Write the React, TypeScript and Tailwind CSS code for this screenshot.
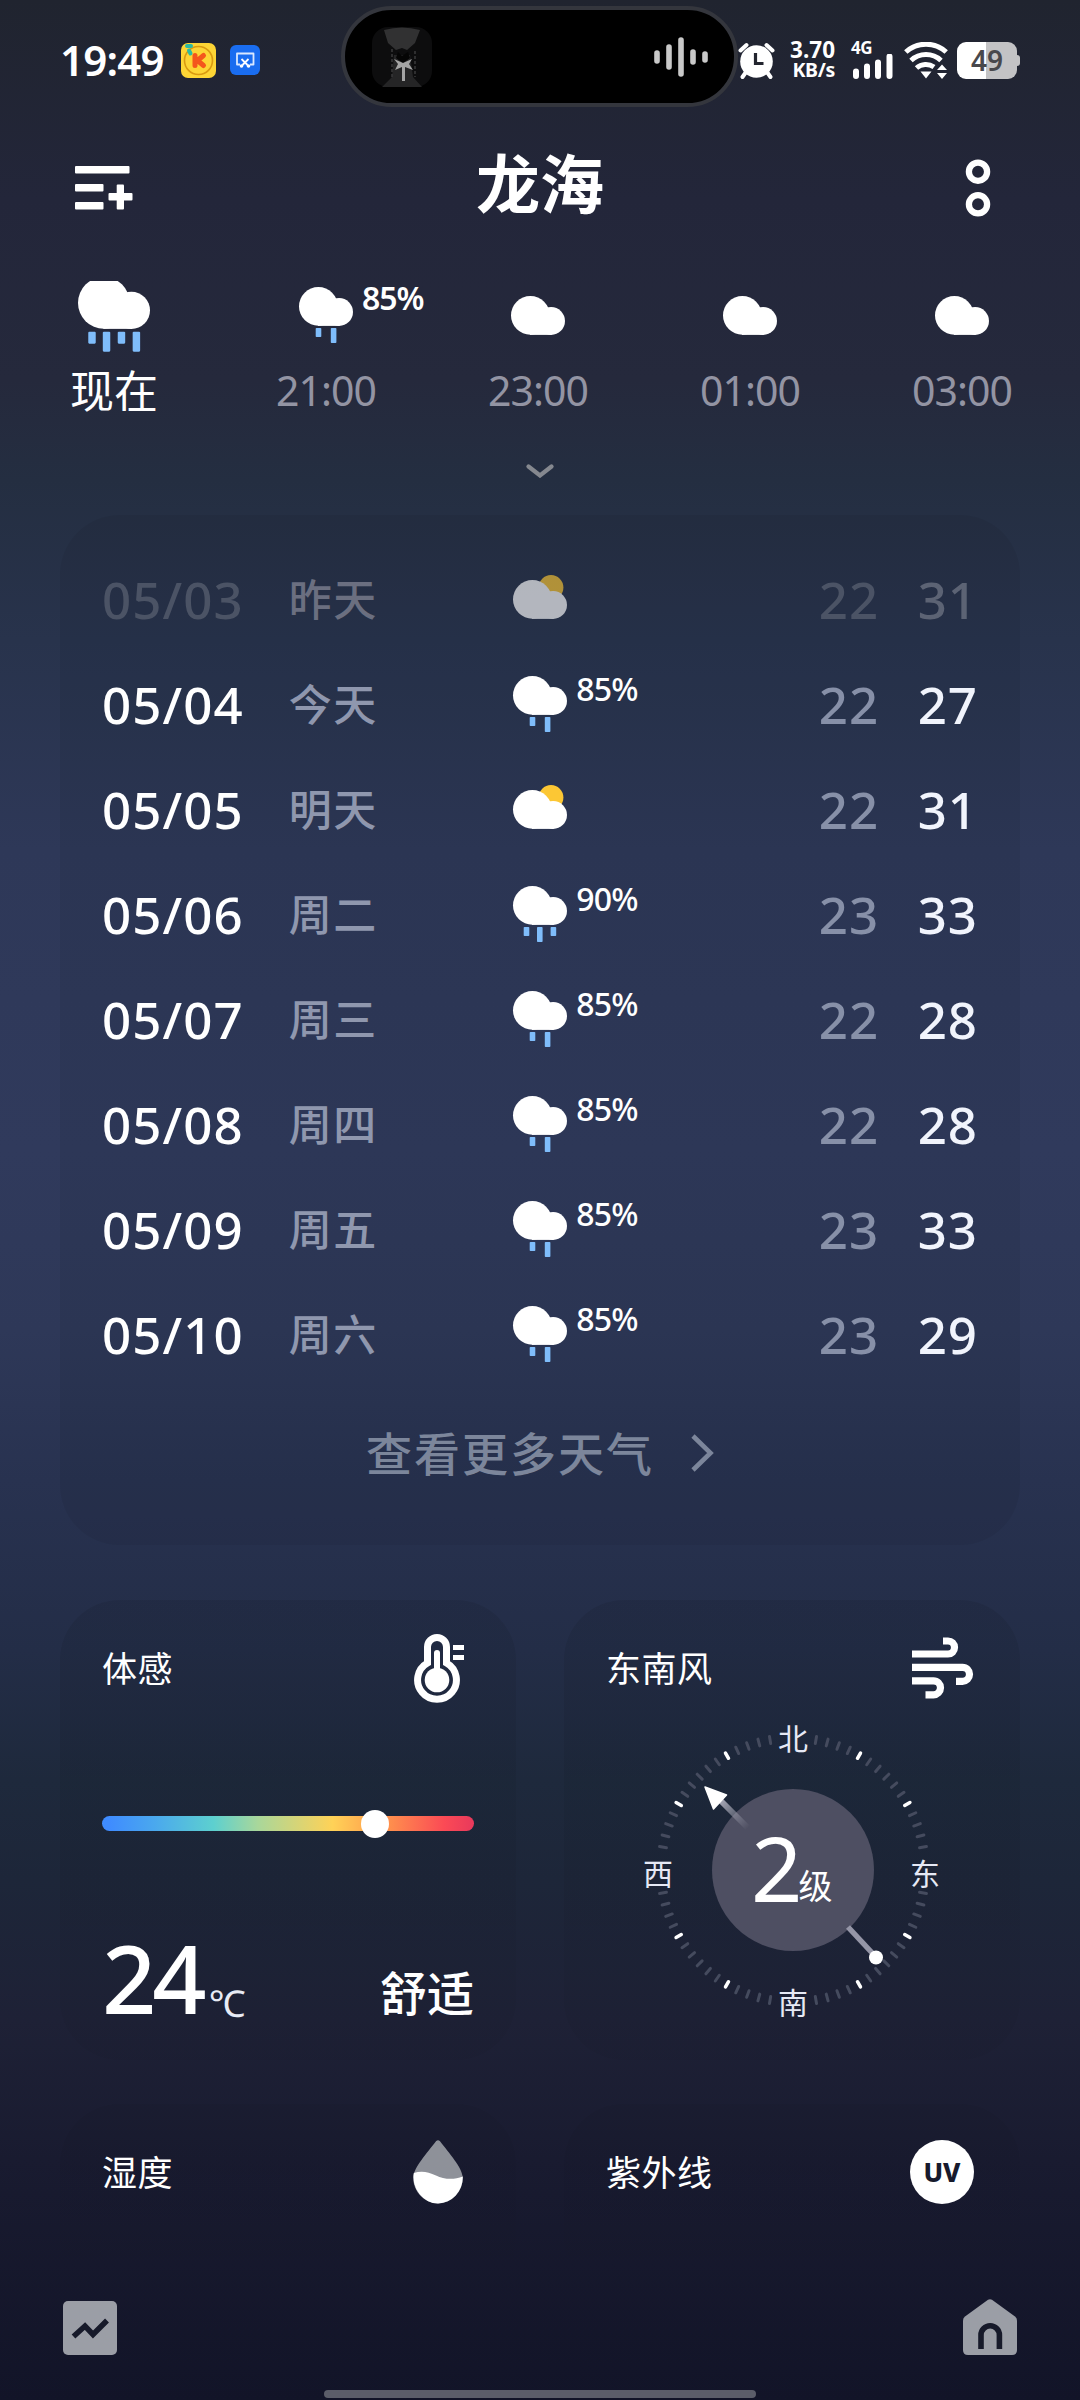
import type { ReactNode } from "react";
import clsx from "clsx";

type Rain = "none" | "light" | "medium" | "heavy";

interface HourItem {
    label: string;
    rain: Rain;
    chance?: string;
    now?: boolean;
}

interface DayItem {
    date: string;
    day: string;
    rain: Rain;
    sun?: boolean;
    chance?: string;
    low: number;
    high: number;
    past?: boolean;
}

const hours: HourItem[] = [
    { label: "现在", rain: "heavy", now: true },
    { label: "21:00", rain: "light", chance: "85%" },
    { label: "23:00", rain: "none" },
    { label: "01:00", rain: "none" },
    { label: "03:00", rain: "none" },
];

const days: DayItem[] = [
    { date: "05/03", day: "昨天", rain: "none", sun: true, low: 22, high: 31, past: true },
    { date: "05/04", day: "今天", rain: "light", chance: "85%", low: 22, high: 27 },
    { date: "05/05", day: "明天", rain: "none", sun: true, low: 22, high: 31 },
    { date: "05/06", day: "周二", rain: "medium", chance: "90%", low: 23, high: 33 },
    { date: "05/07", day: "周三", rain: "light", chance: "85%", low: 22, high: 28 },
    { date: "05/08", day: "周四", rain: "light", chance: "85%", low: 22, high: 28 },
    { date: "05/09", day: "周五", rain: "light", chance: "85%", low: 23, high: 33 },
    { date: "05/10", day: "周六", rain: "light", chance: "85%", low: 23, high: 29 },
];

// x offset and length of every drop under the cloud
const drops: Record<Rain, [number, number][]> = {
    none: [],
    light: [[16.7, 9], [31.8, 15]],
    medium: [[10.7, 9], [24, 15], [37.6, 9]],
    heavy: [[7.7, 9], [18.6, 15], [29.8, 9], [41, 15]],
};

function WeatherIcon({ rain, sun, className }: { rain: Rain; sun?: boolean; className?: string }) {
    // dry clouds sit lower in the box than rainy ones
    const top = rain === "none" ? 9 : 0;
    return (
        <svg viewBox="0 0 54 56" className={clsx("shrink-0", className)}>
            {sun && <circle cx="38" cy={top + 7.5} r="12.4" fill="#fcc734" />}
            <g fill="#fff" transform={`translate(0 ${top})`}>
                <circle cx="19.4" cy="19.4" r="19.4" />
                <circle cx="40.1" cy="25" r="13.9" />
                <rect x="19" y="18" width="21.5" height="20.9" />
            </g>
            {drops[rain].map(([x, h]) => (
                <rect key={x} x={x} y="41" width="5.6" height={h} rx="0.8" fill="#7fbdfb" />
            ))}
        </svg>
    );
}

function StatusBar() {
    return (
        <div className="flex h-[114px] shrink-0">
            <div className="flex w-[341px] items-center pt-1.5 pl-[60px]">
                <span className="w-[121px] text-[42px] leading-none font-semibold tracking-[-0.8px]">19:49</span>
                <svg viewBox="0 0 35 35" className="size-[35px]">
                    <rect width="35" height="35" rx="7" fill="#fdd535" />
                    <circle cx="17.5" cy="17.5" r="14" fill="none" stroke="#d99a10" strokeWidth="1.600" />
                    <path d="M14 12.500v10M22.500 12.500l-6 5 6 5" fill="none" stroke="#f4571c" strokeWidth="5" strokeLinejoin="round" strokeLinecap="round" />
                    <path d="M6 3l4 0M8 7.500l1.500 3" stroke="#2cb9a3" strokeWidth="4" strokeLinecap="round" />
                </svg>
                <svg viewBox="0 0 30 30" className="ml-[14px] size-[30px]">
                    <rect width="30" height="30" rx="6" fill="#1a6df0" />
                    <path d="M10 19.500H7V8.500h16.500v11H20" fill="none" stroke="#d9e8ff" strokeWidth="1.800" strokeLinejoin="round" />
                    <path d="M11.500 14l6 6M18.500 14l-6 6" stroke="#fff" strokeWidth="1.800" />
                    <circle cx="11.500" cy="21" r="1.800" fill="#fff" />
                    <circle cx="18.500" cy="21" r="1.800" fill="#fff" />
                </svg>
            </div>
            <div className="mt-1.5 flex h-[101px] w-[397px] items-center justify-between rounded-full border-[4px] border-[#34363d] bg-black pr-[26px] pl-[27px]">
                <svg viewBox="0 0 60 60" className="size-[60px]">
                    <rect width="60" height="60" rx="16" fill="#0d0d0e" />
                    <path d="M12 3q18-5 36 0l-5 13-8 7-5-2-6 2-8-7z" fill="#313132" />
                    <path d="M10 60l10-10 2-22h16l3 22 9 10z" fill="#252526" />
                    <path d="M26 25l4 4 6-4 2 6-7 5-7-5z" fill="#050505" />
                    <path d="M22 32l9 4 9-4-3 5 4 6-8-3v14h-3V40l-7 3 3-6z" fill="#a4a4a4" />
                    <path d="M20 22v28M43 24v26" stroke="#3a3a3b" strokeWidth="1.500" strokeDasharray="3 2" />
                </svg>
                <svg viewBox="0 0 54 40" className="h-10 w-[54px]" stroke="#c9c9c9" strokeWidth="5.6" strokeLinecap="round">
                    <path d="M3 16v8M15 10v20M27 3v34M39 15v10M51 17v6" />
                </svg>
            </div>
            <div className="flex items-center pt-1.5">
                <svg viewBox="0 0 37 37" className="size-[37px]">
                    <path d="M2.500 8.500l6-5.500M34.500 8.500l-6-5.500M8 30l-3.500 5M29 30l3.500 5" stroke="#fff" strokeWidth="4" strokeLinecap="round" />
                    <circle cx="18.500" cy="19.500" r="16.300" fill="#fff" />
                    <path d="M17.500 11v10.500h8" fill="none" stroke="#23252f" strokeWidth="3.200" />
                </svg>
                <div className="ml-[12px] flex w-[48px] flex-col items-end text-right font-bold">
                    <span className="text-[22.5px] leading-5">3.70</span>
                    <span className="text-[19.500px] leading-5 tracking-[-0.3px]">KB/s</span>
                </div>
                <div className="ml-4 flex h-[37px] w-[43px] flex-col">
                    <span className="h-3 text-[17px] leading-3 font-bold tracking-[-0.5px]">4G</span>
                    <svg viewBox="0 0 43 25" className="h-[25px] w-[43px]" stroke="#fff" strokeWidth="6" strokeLinecap="round">
                        <path d="M5 17.500V22M16 12.500V22M27 8.500V22M38.500 2.500V22" />
                    </svg>
                </div>
                <svg viewBox="0 0 44 37" className="ml-[10px] h-[37px] w-11" fill="none" stroke="#fff" strokeWidth="5">
                    <path d="M1.800 10a30 30 0 0 1 40.400 0" />
                    <path d="M7 18.500a22 22 0 0 1 30 0" />
                    <path d="M12.500 26a14 14 0 0 1 17.500-1" />
                    <path d="M16.500 29.500h11l-5.500 7zM38 22.500l5 5.500h-10zM38 37l5-6h-10z" fill="#fff" stroke="none" />
                </svg>
                <div className="ml-[9px] flex h-[37px] w-[60px] items-center justify-center rounded-[9px] bg-[linear-gradient(90deg,#fff_48%,#c3c3c5_48%)] text-[28px] leading-none font-semibold text-[#48484c]">
                    49
                </div>
                <div className="h-[11px] w-[3px] rounded-r-sm bg-[#c3c3c5]" />
            </div>
        </div>
    );
}

function Header() {
    return (
        <div className="flex h-[136px] shrink-0 items-center pr-[89px] pl-[75px]">
            <svg viewBox="0 0 58 44" className="mt-3 h-11 w-[58px]" fill="#fff">
                <rect width="54.500" height="7.500" rx="1" />
                <rect y="18" width="28.500" height="7.500" rx="1" />
                <rect y="36" width="28.500" height="7.500" rx="1" />
                <rect x="33.500" y="27" width="24" height="7.500" rx="1" />
                <rect x="41.700" y="18.500" width="7.300" height="25" rx="1" />
            </svg>
            <h1 className="mt-1 flex-1 pr-[18px] text-center text-[64px] leading-none font-bold">龙海</h1>
            <svg viewBox="0 0 26 58" className="mt-3 h-[58px] w-[26px]" fill="none" stroke="#fff" strokeWidth="6.300">
                <circle cx="13" cy="12.700" r="9.100" />
                <circle cx="13" cy="45.300" r="9.100" />
            </svg>
        </div>
    );
}

function HourlyForecast() {
    return (
        <div className="flex h-[200px] shrink-0 pl-2">
            {hours.map((h) => (
                <div key={h.label} className="flex w-[212px] flex-col items-center">
                    <div className={clsx("relative flex h-[98px]", h.now ? "mt-[31px] overflow-hidden" : "mt-[37px]")}>
                        <WeatherIcon
                            rain={h.rain}
                            className={h.now ? "-mt-1 h-[74.7px] w-[72px]" : "h-14 w-[54px]"}
                        />
                        {h.chance && (
                            <span className="absolute top-[-5px] left-[63px] text-[32px] leading-none font-semibold tracking-[-1px]">
                                {h.chance}
                            </span>
                        )}
                    </div>
                    {h.now ? (
                        <span className="-mt-[10px] text-[44px] leading-none">{h.label}</span>
                    ) : (
                        <span className="-mt-[15px] text-[41px] leading-none tracking-[-1px] text-[#9394a3]">{h.label}</span>
                    )}
                </div>
            ))}
        </div>
    );
}

function DailyForecast() {
    return (
        <div className="mx-[60px] mt-[37px] h-[1030px] shrink-0 rounded-[60px] bg-black/5 pt-8">
            {days.map((d) => (
                <div key={d.date} className="flex h-[105px] items-center pr-[42px] pl-[42px] text-[51px] leading-none font-medium">
                    <span className={clsx("w-[187px] tracking-[1.100px]", d.past && "text-[#4b5365]")}>{d.date}</span>
                    <span className={clsx("w-[225px] text-[43px] tracking-[1.500px]", d.past ? "text-[#6b6f80]" : "text-[#8f97ae]")}>
                        {d.day}
                    </span>
                    <div className={clsx("-mt-[2px] flex h-14 w-[306px]", d.past && "opacity-65")}>
                        <WeatherIcon rain={d.rain} sun={d.sun} className="h-14 w-[54px] overflow-visible" />
                        {d.chance && (
                            <span className="-mt-[3px] ml-[9px] text-[32px] leading-none tracking-[-0.8px]">{d.chance}</span>
                        )}
                    </div>
                    <span className={clsx("w-[99px] tracking-[1px]", d.past ? "text-[#4b5365]" : "text-[#8790a8]")}>{d.low}</span>
                    <span className={clsx("tracking-[1px]", d.past ? "text-[#5c6374]" : "text-[#f1f4fc]")}>{d.high}</span>
                </div>
            ))}
            <div className="flex h-[132px] items-center justify-center gap-[37px] text-[#7c869b]">
                <span className="text-[46px] leading-none font-medium tracking-[2px]">查看更多天气</span>
                <svg viewBox="0 0 23 38" className="h-[38px] w-[23px]" fill="none" stroke="currentColor" strokeWidth="4.600">
                    <path d="M2 2l17.500 17L2 36" />
                </svg>
            </div>
        </div>
    );
}

function Card({ title, icon, children, className }: { title: string; icon: ReactNode; children?: ReactNode; className?: string }) {
    return (
        <div className={clsx("w-[456px] rounded-[60px] px-[42px]", className)}>
            <div className="flex h-[136px] items-center justify-between">
                <span className="text-[35px] leading-none tracking-[0.5px]">{title}</span>
                {icon}
            </div>
            {children}
        </div>
    );
}

function ThermometerIcon() {
    return (
        <svg viewBox="0 0 52 70" className="mt-[2px] mr-[8px] h-[70px] w-[52px]">
            <path d="M13.500 29V13a9.500 9.500 0 0 1 19 0v16a19.400 19.400 0 1 1-19 0z" fill="none" stroke="#fff" strokeWidth="7" />
            <circle cx="23" cy="46" r="12.300" fill="#fff" />
            <path d="M23 19v24" stroke="#fff" strokeWidth="6" strokeLinecap="round" />
            <path d="M39 13.500h11M39 23.500h11" stroke="#fff" strokeWidth="5" />
        </svg>
    );
}

function WindIcon() {
    return (
        <svg viewBox="0 0 62 62" className="mr-[4px] size-[62px]" fill="none" stroke="#fff" strokeWidth="7.200">
            <path d="M0 17h36a6.500 6.500 0 0 0 0-13h-5M0 30.300h50.500a7 7 0 0 1 0 14H44M0 43.800h21.500a7 7 0 0 1 0 14H13.500" />
        </svg>
    );
}

// Ticks are set every 5 degrees, with a bright one every 30; the four letters leave gaps
const ticks = Array.from({ length: 72 }, (_, i) => i * 5).filter((a) => a % 90 >= 10 && a % 90 <= 80);

function Compass() {
    return (
        <svg viewBox="0 0 320 320" className="-mt-[26px] ml-[27px] size-[320px]">
            <defs>
                <linearGradient id="shaft" gradientUnits="userSpaceOnUse" x1="88" y1="91" x2="115" y2="118">
                    <stop offset="0" stopColor="#a5a6b4" />
                    <stop offset="1" stopColor="#a5a6b4" stopOpacity="0" />
                </linearGradient>
            </defs>
            {ticks.map((a) => (
                <line
                    key={a}
                    x1="160"
                    x2="160"
                    y1={a % 30 === 0 ? 25 : 24.500}
                    y2={a % 30 === 0 ? 31 : 31.500}
                    transform={`rotate(${a} 160 160)`}
                    stroke={a % 30 === 0 ? "#fff" : "#454b5e"}
                    strokeWidth={a % 30 === 0 ? 3.500 : 3}
                    strokeLinecap="round"
                />
            ))}
            <circle cx="160" cy="160" r="81" fill="#4e4f62" />
            <path d="M86 89l29 29" stroke="url(#shaft)" strokeWidth="6" />
            <path d="M215 217l27 29" stroke="#9596a7" strokeWidth="5.500" />
            <path d="M72 77l21.500 8-13 14z" fill="#fff" stroke="#fff" strokeWidth="1.500" strokeLinejoin="round" />
            <circle cx="243" cy="247.500" r="7" fill="#fff" />
            <g fill="#e6e9f5" fontSize="30" textAnchor="middle">
                <text x="160" y="40">北</text>
                <text x="160" y="304">南</text>
                <text x="25" y="175">西</text>
                <text x="292" y="175">东</text>
            </g>
            <text x="118" y="192" fontSize="90" fill="#fff">2</text>
            <text x="165.500" y="189" fontSize="34" fill="#fff">级</text>
        </svg>
    );
}

function DropIcon() {
    return (
        <svg viewBox="0 0 50 64" className="mr-[11px] h-16 w-[50px]">
            <path d="M23 1.200q2-2 4 0C36 13 49 27 49.800 37.500A25 26 0 0 1 25 63.500 25 26 0 0 1 .2 37.500C1 27 14 13 23 1.200z" fill="#8e9199" />
            <path d="M.8 33C8 30.500 15 31.500 23 35.500S41 40 49.800 36.500A25 26.500 0 0 1 25 63.500 25 26.500 0 0 1 .8 33z" fill="#fff" />
        </svg>
    );
}

export default function App() {
    return (
        <div className="flex h-[2400px] w-[1080px] flex-col overflow-hidden bg-[linear-gradient(180deg,#20242f_0px,#23263a_200px,#25293c_380px,#242e41_480px,#28334c_640px,#2e3858_850px,#303a5c_1150px,#2e3858_1330px,#283250_1480px,#232d47_1650px,#1e293c_1780px,#1d2639_1880px,#1e2136_2020px,#191b30_2160px,#121428_2400px)] font-['Noto_Sans','Noto_Sans_CJK_SC',sans-serif] text-white">
            <StatusBar />
            <Header />
            <HourlyForecast />
            <div className="flex h-7 shrink-0 items-end justify-center">
                <svg viewBox="0 0 28 15" className="h-[15px] w-7" fill="none" stroke="#85888f" strokeWidth="4.200" strokeLinecap="round">
                    <path d="M2.500 3.500L14 12.500l11.500-9" />
                </svg>
            </div>
            <DailyForecast />

            <div className="mt-[55px] flex h-[504px] shrink-0 items-start justify-between px-[60px]">
                <Card title="体感" icon={<ThermometerIcon />} className="h-[460px] bg-linear-to-b from-black/8 to-black/3">
                    <div className="mt-[80px] flex h-[15px] w-[372px] items-center rounded-full bg-[linear-gradient(90deg,#3f8cff_2%,#4aa8ee_14%,#5dd0cf_30%,#a9d79a_42%,#ffd257_62%,#ff9a4c_75%,#fb4a55_92%,#e8395c_100%)]">
                        <div className="ml-[259px] size-7 rounded-full bg-white" />
                    </div>
                    <div className="mt-[91px] flex items-end justify-between">
                        <div className="flex items-end">
                            <span className="text-[95px] leading-[110px] font-medium tracking-[-4px]">24</span>
                            <span className="ml-[6px] text-[37px] leading-[58px] text-[#e8ebf5]">℃</span>
                        </div>
                        <span className="text-[47px] leading-[77px] font-medium">舒适</span>
                    </div>
                </Card>
                <Card title="东南风" icon={<WindIcon />} className="h-[460px] bg-linear-to-b from-black/8 to-black/3">
                    <Compass />
                </Card>
            </div>

            <div className="flex h-[197px] shrink-0 justify-between px-[60px]">
                <Card title="湿度" icon={<DropIcon />} className="bg-linear-to-b from-black/5 to-transparent" />
                <Card
                    title="紫外线"
                    icon={
                        <div className="mr-[4px] flex size-16 items-center justify-center rounded-full bg-white text-[26px] leading-none font-extrabold text-[#171a2d]">
                            UV
                        </div>
                    }
                    className="bg-linear-to-b from-black/5 to-transparent"
                />
            </div>

            <div className="flex h-[54px] shrink-0 items-end justify-between px-[63px]">
                <svg viewBox="0 0 54 54" className="size-[54px]">
                    <rect width="54" height="54" rx="5" fill="#9b9ea6" />
                    <path d="M10.500 35.500L22 25l8 8.500 14-14" fill="none" stroke="#171a2a" strokeWidth="5.500" />
                </svg>
                <svg viewBox="0 0 54 56" className="h-14 w-[54px]">
                    <path d="M25 .8q2-1.300 4 0L52 17.500q2 1.500 2 4V51q0 5-5 5H5q-5 0-5-5V21.500q0-2.500 2-4z" fill="#9b9ea6" />
                    <path d="M18 50V36a9.200 9.200 0 0 1 18.400 0v14" fill="none" stroke="#171a2a" strokeWidth="5.600" />
                </svg>
            </div>
            <div className="mx-auto mt-[35px] h-2 w-[432px] shrink-0 rounded-full bg-[#5b5d69]" />
        </div>
    );
}
